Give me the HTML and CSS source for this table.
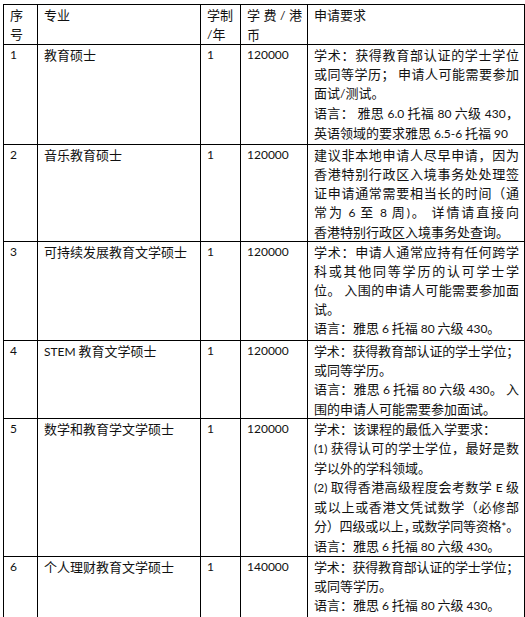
FILE: index.html
```html
<!DOCTYPE html>
<html lang="zh-CN">
<head>
<meta charset="utf-8">
<title>专业列表</title>
<link rel="stylesheet" href="styles.css">
</head>
<body>
<table class="grid">
  <colgroup>
    <col class="c-no">
    <col class="c-name">
    <col class="c-yr">
    <col class="c-fee">
    <col class="c-req">
  </colgroup>
  <tr class="r-head">
    <td>序号</td>
    <td>专业</td>
    <td>学制<br><span class="lat">/</span>年</td>
    <td><div class="fl">学费<span class="lat">/</span>港</div><div>币</div></td>
    <td>申请要求</td>
  </tr>
  <tr class="r1">
    <td class="lat">1</td>
    <td>教育硕士</td>
    <td class="lat">1</td>
    <td class="lat">120000</td>
    <td>
      <div class="fl">学术：获得教育部认证的学士学位</div>
      <div class="fl">或同等学历； 申请人可能需要参加</div>
      <div>面试<span class="lat">/</span>测试。</div>
      <div class="fl">语言： 雅思 <span class="lat">6.0</span> 托福 <span class="lat">80</span> 六级 <span class="lat">430</span>，</div>
      <div>英语领域的要求雅思 <span class="lat">6.5-6</span> 托福 <span class="lat">90</span></div>
    </td>
  </tr>
  <tr class="r2">
    <td class="lat">2</td>
    <td>音乐教育硕士</td>
    <td class="lat">1</td>
    <td class="lat">120000</td>
    <td>
      <div class="fl">建议非本地申请人尽早申请，因为</div>
      <div class="fl">香港特别行政区入境事务处处理签</div>
      <div class="fl">证申请通常需要相当长的时间（通</div>
      <div class="fl">常为 <span class="lat">6</span> 至 <span class="lat">8</span> 周<span class="lat">)</span>。 详情请直接向</div>
      <div>香港特别行政区入境事务处查询。</div>
    </td>
  </tr>
  <tr class="r3">
    <td class="lat">3</td>
    <td>可持续发展教育文学硕士</td>
    <td class="lat">1</td>
    <td class="lat">120000</td>
    <td>
      <div class="fl">学术：申请人通常应持有任何跨学</div>
      <div class="fl">科或其他同等学历的认可学士学</div>
      <div class="fl">位。 入围的申请人可能需要参加面</div>
      <div>试。</div>
      <div>语言：雅思 <span class="lat">6</span> 托福 <span class="lat">80</span> 六级 <span class="lat">430</span>。</div>
    </td>
  </tr>
  <tr class="r4">
    <td class="lat">4</td>
    <td><span class="lat">STEM</span> 教育文学硕士</td>
    <td class="lat">1</td>
    <td class="lat">120000</td>
    <td>
      <div class="fl tight">学术：获得教育部认证的学士学位；</div>
      <div>或同等学历。</div>
      <div class="fl">语言：雅思 <span class="lat">6</span> 托福 <span class="lat">80</span> 六级 <span class="lat">430</span>。 入</div>
      <div>围的申请人可能需要参加面试。</div>
    </td>
  </tr>
  <tr class="r5">
    <td class="lat">5</td>
    <td>数学和教育学文学硕士</td>
    <td class="lat">1</td>
    <td class="lat">120000</td>
    <td>
      <div>学术：该课程的最低入学要求：</div>
      <div class="fl"><span class="lat">(1)</span> 获得认可的学士学位，最好是数</div>
      <div>学以外的学科领域。</div>
      <div class="fl"><span class="lat">(2)</span> 取得香港高级程度会考数学 <span class="lat">E</span> 级</div>
      <div class="fl">或以上或香港文凭试数学（必修部</div>
      <div class="fl tight">分）四级或以上<span class="half">，</span>或数学同等资格<span class="lat">*</span>。</div>
      <div>语言：雅思 <span class="lat">6</span> 托福 <span class="lat">80</span> 六级 <span class="lat">430</span>。</div>
    </td>
  </tr>
  <tr class="r6">
    <td class="lat">6</td>
    <td>个人理财教育文学硕士</td>
    <td class="lat">1</td>
    <td class="lat">140000</td>
    <td>
      <div class="fl tight">学术：获得教育部认证的学士学位；</div>
      <div>或同等学历。</div>
      <div>语言：雅思 <span class="lat">6</span> 托福 <span class="lat">80</span> 六级 <span class="lat">430</span>。</div>
    </td>
  </tr>
  <tr class="r7">
    <td></td>
    <td></td>
    <td></td>
    <td></td>
    <td></td>
  </tr>
</table>
</body>
</html>
```

FILE: styles.css
```css
html, body {
  margin: 0;
  padding: 0;
  background: #ffffff;
}

body {
  font-family: "Noto Sans CJK SC", sans-serif;
  font-size: 13px;
  color: #111111;
  overflow: hidden;
}

.grid {
  border-collapse: collapse;
  table-layout: fixed;
  width: 521px;
  margin: 4px 0 0 3px;
}

.c-no { width: 34px; }
.c-name { width: 163px; }
.c-yr { width: 40px; }
.c-fee { width: 67px; }
.c-req { width: 217px; }

.grid td {
  border: 1px solid #000000;
  padding: 0 5px 0 6px;
  vertical-align: top;
  line-height: 19px;
  overflow: hidden;
}

.lat {
  font-family: Lato, "Liberation Sans", sans-serif;
  font-size: 12px;
}

.fl {
  text-align: justify;
  text-align-last: justify;
}

.tight {
  letter-spacing: -0.3px;
}

.half {
  letter-spacing: -5px;
}

.r-head { height: 39px; }
.r1 { height: 100px; }
.r2 { height: 97px; }
.r3 { height: 99px; }
.r4 { height: 78px; }
.r5 { height: 133px; }
.r6 { height: 65px; }
.r7 { height: 30px; }
```
